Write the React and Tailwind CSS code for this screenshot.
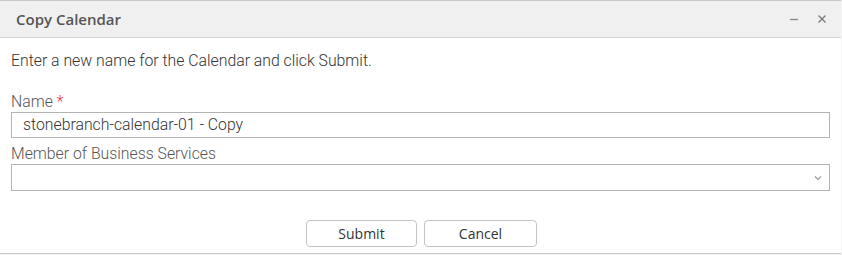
export default function App() {
  return (
    <div className="w-[842px] h-[255px] bg-[#f4f4f4] flex">
      <div className="w-[841px] h-[254px] bg-white border-t border-b border-[#c8c8c8] flex flex-col">
        <div className="h-[37px] bg-[#f0f0f0] border-b border-[#d4d4d4] flex items-center pl-[16px] pr-[14px]">
          <div className="flex-1 text-[15px] font-semibold text-[#555] font-['Open_Sans',sans-serif]">Copy Calendar</div>
          <div className="flex items-center gap-[18px] text-[#777]">
            <svg width="10" height="10" viewBox="0 0 10 10"><path d="M1 5.5h8" stroke="#888" strokeWidth="1.3" /></svg>
            <svg width="10" height="10" viewBox="0 0 10 10"><path d="M1.5 1.5l7 7M8.5 1.5l-7 7" stroke="#777" strokeWidth="1.3" /></svg>
          </div>
        </div>
        <div className="flex flex-col px-[11px] font-['Roboto',sans-serif] font-light text-[15.8px] text-[#333]">
          <div className="mt-[13px] h-[20px] leading-[20px]">Enter a new name for the Calendar and click Submit.</div>
          <div className="mt-[21px] h-[20px] leading-[20px] text-[#555]">Name <span className="text-[#e53935]">*</span></div>
          <div className="h-[26px] w-[819px] border border-[#b4b4b4] flex items-center px-[11px] text-[#333]">stonebranch-calendar-01 - Copy</div>
          <div className="mt-[6px] h-[20px] leading-[20px] text-[#555]">Member of Business Services</div>
          <div className="h-[27px] w-[819px] border border-[#b4b4b4] flex items-center justify-end pr-[7px]">
            <svg width="8" height="6" viewBox="0 0 8 6"><path d="M1 1.5l3 3 3-3" stroke="#999" strokeWidth="1.2" fill="none" /></svg>
          </div>
          <div className="mt-[29px] flex justify-center gap-[7px] pl-[2px] font-['Open_Sans',sans-serif] font-normal">
            <button className="w-[111px] h-[27px] border border-[#c4c4c4] rounded-[4px] bg-white text-[14px] text-[#333]">Submit</button>
            <button className="w-[113px] h-[27px] border border-[#c4c4c4] rounded-[4px] bg-white text-[14px] text-[#333]">Cancel</button>
          </div>
        </div>
      </div>
    </div>
  );
}
